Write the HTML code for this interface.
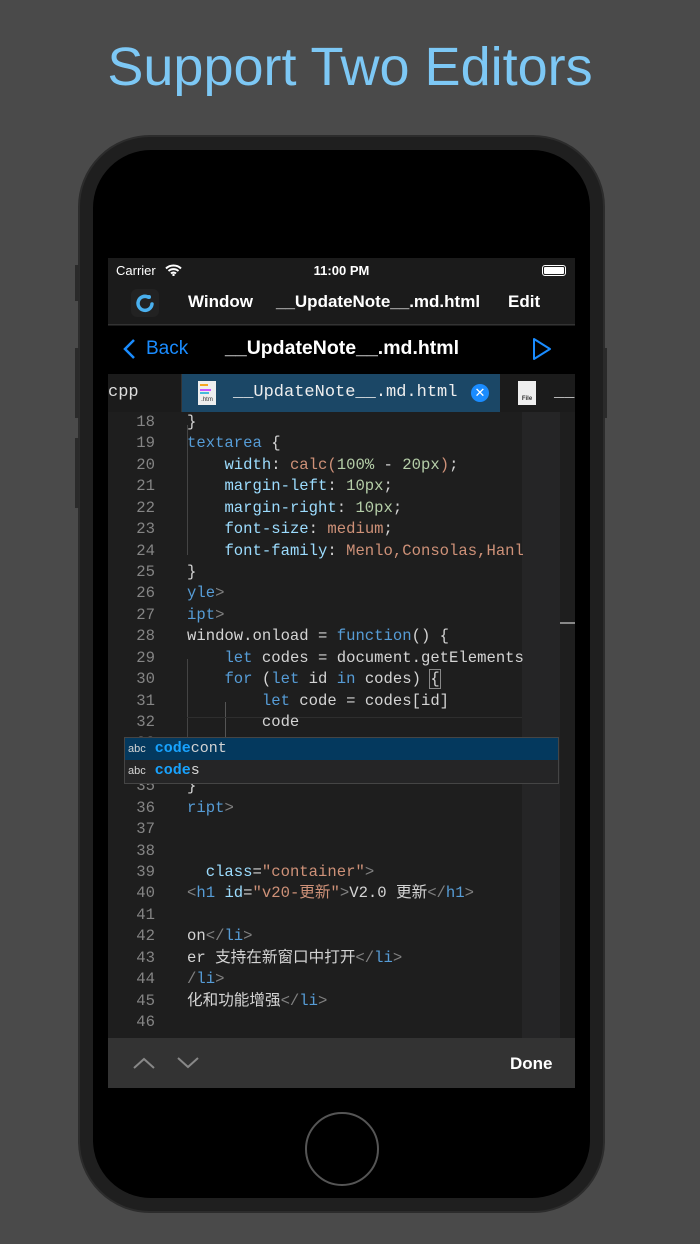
<!DOCTYPE html>
<html><head><meta charset="utf-8"><style>
*{margin:0;padding:0;box-sizing:border-box}
body{width:700px;height:1244px;background:#4a4a4a;position:relative;overflow:hidden;font-family:"Liberation Sans",sans-serif}
.title{position:absolute;top:36px;left:0;width:700px;text-align:center;color:#7dc8f5;font-size:54px}
.phone{position:absolute;left:78px;top:135px;width:527px;height:1078px;border-radius:72px;background:#1f1f1f;border:2px solid #2c2c2c}
.bez{position:absolute;left:93px;top:150px;width:497px;height:1048px;border-radius:58px;background:#000}
.btn{position:absolute;background:#2a2a2a;width:4px}
.screen{position:absolute;left:108px;top:258px;width:467px;height:830px;background:#1e1e1e;overflow:hidden}
.sb{position:absolute;left:0;top:0;width:467px;height:68px;background:#1b1b1b;color:#fff}
.nav{position:absolute;left:0;top:68px;width:467px;height:48px;background:#000;color:#fff}
.tabs{position:absolute;left:0;top:116px;width:467px;height:38px;background:#1b1b1b}
.code{position:absolute;left:0;top:154px;width:467px;font-family:"Liberation Mono","Noto Sans CJK SC",monospace;font-size:15.6px;color:#d4d4d4}
.ln{position:absolute;left:0;width:47px;text-align:right;color:#858585;height:21px;line-height:21px}
.tx{position:absolute;left:79px;white-space:pre;height:21px;line-height:21px}
.k{color:#569cd6}.p{color:#9cdcfe}.s{color:#ce9178}.n{color:#b5cea8}.g{color:#808080}
.home{position:absolute;left:305px;top:1112px;width:74px;height:74px;border-radius:50%;border:2px solid #555}
.m{font-size:17px;font-weight:bold;position:absolute;top:34px}
</style></head><body>
<div class="title">Support Two Editors</div>
<div class="phone"></div>
<div class="btn" style="left:75px;top:265px;height:36px"></div>
<div class="btn" style="left:75px;top:348px;height:70px"></div>
<div class="btn" style="left:75px;top:438px;height:70px"></div>
<div class="btn" style="left:603px;top:348px;height:70px"></div>
<div class="bez"></div>
<div class="screen">
 <div class="sb">
  <div style="position:absolute;left:8px;top:5px;font-size:13px">Carrier</div>
  <svg style="position:absolute;left:57px;top:6px" width="17" height="12" viewBox="0 0 17 12"><path d="M1 4.5a11 11 0 0 1 15 0M3.5 7a7.5 7.5 0 0 1 10 0M6 9.5a3.5 3.5 0 0 1 5 0" stroke="#fff" stroke-width="2" fill="none"/><circle cx="8.5" cy="11" r="1.2" fill="#fff"/></svg>
  <div style="position:absolute;left:0;width:467px;text-align:center;top:5px;font-size:13px;font-weight:bold">11:00 PM</div>
  <div style="position:absolute;left:434px;top:7px;width:24px;height:11px;border:1px solid #fff;border-radius:3px;padding:1px"><div style="background:#fff;width:100%;height:100%;border-radius:1px"></div></div>
  <div style="position:absolute;left:23px;top:31px;width:28px;height:28px;border-radius:6px;background:#222"><svg width="28" height="28" viewBox="0 0 28 28"><path d="M17 8a7 7 0 1 0 4 7" stroke="#4ab0ee" stroke-width="3.5" fill="none" stroke-linecap="round"/><circle cx="18" cy="8" r="2" fill="#4ab0ee"/></svg></div>
  <div class="m" style="left:80px">Window</div>
  <div class="m" style="left:168px">__UpdateNote__.md.html</div>
  <div class="m" style="left:400px">Edit</div>
  <div style="position:absolute;left:0;top:66px;width:467px;height:1px;background:#333"></div>
 </div>
 <div class="nav">
  <svg style="position:absolute;left:14px;top:12px" width="14" height="22" viewBox="0 0 14 22"><path d="M12 2 3 11l9 9" stroke="#1a8cff" stroke-width="2.5" fill="none"/></svg>
  <div style="position:absolute;left:38px;top:12px;font-size:19px;color:#1a8cff">Back</div>
  <div style="position:absolute;left:117px;top:11px;font-size:19.5px;font-weight:bold">__UpdateNote__.md.html</div>
  <svg style="position:absolute;left:424px;top:11px" width="20" height="24" viewBox="0 0 20 24"><path d="M2 2v20l16-10z" stroke="#1a8cff" stroke-width="2" fill="none" stroke-linejoin="round"/></svg>
 </div>
 <div class="tabs">
  <div style="position:absolute;left:0;top:9px;font-family:'Liberation Mono',monospace;font-size:17px;color:#ddd">cpp</div>
  <div style="position:absolute;left:73px;top:0;width:1px;height:38px;background:#333"></div>
  <div style="position:absolute;left:74px;top:0;width:318px;height:38px;background:#1b4766">
   <div style="position:absolute;left:16px;top:7px;width:18px;height:24px;background:#eee"><div style="margin:3px 2px;height:2px;background:#f5a623;width:8px"></div><div style="margin:1px 2px;height:2px;background:#c5f;width:11px"></div><div style="margin:1px 2px;height:2px;background:#4bd;width:9px"></div><div style="font-size:6px;color:#333;text-align:center;margin-top:3px">.htm</div></div>
   <div style="position:absolute;left:51px;top:9px;font-family:'Liberation Mono',monospace;font-size:17px;color:#eee">__UpdateNote__.md.html</div>
   <div style="position:absolute;left:289px;top:10px;width:18px;height:18px;border-radius:50%;background:#1a8cff;color:#fff;font-size:13px;text-align:center;line-height:18px">✕</div>
  </div>
  <div style="position:absolute;left:410px;top:7px;width:18px;height:24px;background:#eee;font-size:6px;color:#333;padding-top:15px;text-align:center;font-weight:bold">File</div>
  <div style="position:absolute;left:446px;top:9px;font-family:'Liberation Mono',monospace;font-size:17px;color:#ddd">__</div>
 </div>
 <div style="position:absolute;left:414px;top:154px;width:38px;height:676px;background:#252526"></div>
 <div style="position:absolute;left:452px;top:364px;width:15px;height:2px;background:#888"></div>
 <div style="position:absolute;left:79px;top:167px;width:1px;height:130px;background:#444"></div>
 <div style="position:absolute;left:79px;top:401px;width:1px;height:80px;background:#444"></div>
 <div style="position:absolute;left:117px;top:444px;width:1px;height:40px;background:#555"></div>
 <div style="position:absolute;left:79px;top:459px;width:335px;height:1px;background:#2e2e2e"></div>
 <div class="code" id="c"></div>
 <div style="position:absolute;left:16px;top:479px;width:435px;height:47px;background:#252526;border:1px solid #454545;font-family:'Liberation Mono',monospace;font-size:15px">
  <div style="height:22px;background:#04395e;padding:2px 0 0 3px;color:#d4d4d4"><span style="font-family:'Liberation Sans';font-size:11px">abc</span> <b style="color:#18a3ff">code</b>cont</div>
  <div style="height:22px;padding:2px 0 0 3px;color:#d4d4d4"><span style="font-family:'Liberation Sans';font-size:11px">abc</span> <b style="color:#18a3ff">code</b>s</div>
 </div>
 <div style="position:absolute;left:0;top:780px;width:467px;height:50px;background:#333">
  <svg style="position:absolute;left:24px;top:18px" width="24" height="14" viewBox="0 0 24 14"><path d="M2 12 12 3l10 9" stroke="#888" stroke-width="2" fill="none"/></svg>
  <svg style="position:absolute;left:68px;top:18px" width="24" height="14" viewBox="0 0 24 14"><path d="M2 2l10 9 10-9" stroke="#888" stroke-width="2" fill="none"/></svg>
  <div style="position:absolute;left:402px;top:16px;color:#fff;font-size:17px;font-weight:bold">Done</div>
 </div>
</div>
<div class="home"></div>
<script>
var L=[
['18','}'],
['19','<span class="k">textarea</span> {'],
['20','    <span class="p">width</span>: <span class="s">calc(</span><span class="n">100%</span> - <span class="n">20px</span><span class="s">)</span>;'],
['21','    <span class="p">margin-left</span>: <span class="n">10px</span>;'],
['22','    <span class="p">margin-right</span>: <span class="n">10px</span>;'],
['23','    <span class="p">font-size</span>: <span class="s">medium</span>;'],
['24','    <span class="p">font-family</span>: <span class="s">Menlo,Consolas,Hanl</span>'],
['25','}'],
['26','<span class="k">yle</span><span class="g">&gt;</span>'],
['27','<span class="k">ipt</span><span class="g">&gt;</span>'],
['28','window.onload = <span class="k">function</span>() {'],
['29','    <span class="k">let</span> codes = document.getElements'],
['30','    <span class="k">for</span> (<span class="k">let</span> id <span class="k">in</span> codes) <span style="outline:1px solid #888">{</span>'],
['31','        <span class="k">let</span> code = codes[id]'],
['32','        code'],
['33',''],['34',''],
['35','}'],
['36','<span class="k">ript</span><span class="g">&gt;</span>'],
['37',''],['38',''],
['39','  <span class="p">class</span>=<span class="s">"container"</span><span class="g">&gt;</span>'],
['40','<span class="g">&lt;</span><span class="k">h1</span> <span class="p">id</span>=<span class="s">"v20-更新"</span><span class="g">&gt;</span>V2.0 更新<span class="g">&lt;/</span><span class="k">h1</span><span class="g">&gt;</span>'],
['41',''],
['42','on<span class="g">&lt;/</span><span class="k">li</span><span class="g">&gt;</span>'],
['43','er 支持在新窗口中打开<span class="g">&lt;/</span><span class="k">li</span><span class="g">&gt;</span>'],
['44','<span class="g">/</span><span class="k">li</span><span class="g">&gt;</span>'],
['45','化和功能增强<span class="g">&lt;/</span><span class="k">li</span><span class="g">&gt;</span>'],
['46','']];
var h='';L.forEach(function(l,i){var t=i*21.43;h+='<div class="ln" style="top:'+t+'px">'+l[0]+'</div><div class="tx" style="top:'+t+'px">'+l[1]+'</div>';});
document.getElementById('c').innerHTML=h;
</script>
</body></html>
